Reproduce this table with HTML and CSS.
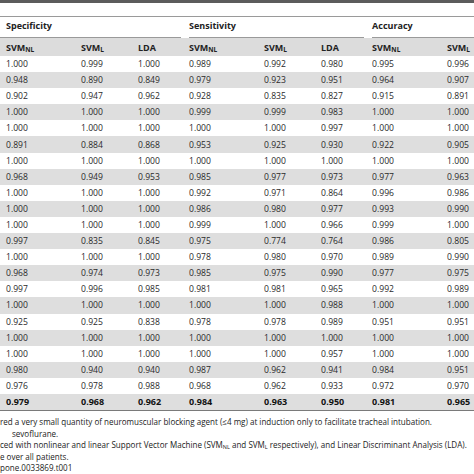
FILE: index.html
```html
<!DOCTYPE html>
<html>
<head>
<meta charset="utf-8">
<link rel="stylesheet" href="styles.css">
</head>
<body>
<div class="page">
  <div class="topbar"></div>
  <table class="data">
    <colgroup>
      <col class="w75"><col class="w57"><col class="w51">
      <col class="w75"><col class="w57"><col class="w51">
      <col class="w75"><col class="wlast">
    </colgroup>
    <thead>
      <tr class="groups">
        <th colspan="3" class="first"><div class="gline">Specificity</div></th>
        <th colspan="3"><div class="gline">Sensitivity</div></th>
        <th colspan="2" class="last"><div class="gline">Accuracy</div></th>
      </tr>
      <tr class="sub">
        <th>SVM<sub>NL</sub></th><th>SVM<sub>L</sub></th><th>LDA</th>
        <th>SVM<sub>NL</sub></th><th>SVM<sub>L</sub></th><th>LDA</th>
        <th>SVM<sub>NL</sub></th><th>SVM<sub>L</sub></th>
      </tr>
    </thead>
    <tbody>
      <tr><td>1.000</td><td>0.999</td><td>1.000</td><td>0.989</td><td>0.992</td><td>0.980</td><td>0.995</td><td>0.996</td></tr>
      <tr><td>0.948</td><td>0.890</td><td>0.849</td><td>0.979</td><td>0.923</td><td>0.951</td><td>0.964</td><td>0.907</td></tr>
      <tr><td>0.902</td><td>0.947</td><td>0.962</td><td>0.928</td><td>0.835</td><td>0.827</td><td>0.915</td><td>0.891</td></tr>
      <tr><td>1.000</td><td>1.000</td><td>1.000</td><td>0.999</td><td>0.999</td><td>0.983</td><td>1.000</td><td>1.000</td></tr>
      <tr><td>1.000</td><td>1.000</td><td>1.000</td><td>1.000</td><td>1.000</td><td>0.997</td><td>1.000</td><td>1.000</td></tr>
      <tr><td>0.891</td><td>0.884</td><td>0.868</td><td>0.953</td><td>0.925</td><td>0.930</td><td>0.922</td><td>0.905</td></tr>
      <tr><td>1.000</td><td>1.000</td><td>1.000</td><td>1.000</td><td>1.000</td><td>1.000</td><td>1.000</td><td>1.000</td></tr>
      <tr><td>0.968</td><td>0.949</td><td>0.953</td><td>0.985</td><td>0.977</td><td>0.973</td><td>0.977</td><td>0.963</td></tr>
      <tr><td>1.000</td><td>1.000</td><td>1.000</td><td>0.992</td><td>0.971</td><td>0.864</td><td>0.996</td><td>0.986</td></tr>
      <tr><td>1.000</td><td>1.000</td><td>1.000</td><td>0.986</td><td>0.980</td><td>0.977</td><td>0.993</td><td>0.990</td></tr>
      <tr><td>1.000</td><td>1.000</td><td>1.000</td><td>0.999</td><td>1.000</td><td>0.966</td><td>0.999</td><td>1.000</td></tr>
      <tr><td>0.997</td><td>0.835</td><td>0.845</td><td>0.975</td><td>0.774</td><td>0.764</td><td>0.986</td><td>0.805</td></tr>
      <tr><td>1.000</td><td>1.000</td><td>1.000</td><td>0.978</td><td>0.980</td><td>0.970</td><td>0.989</td><td>0.990</td></tr>
      <tr><td>0.968</td><td>0.974</td><td>0.973</td><td>0.985</td><td>0.975</td><td>0.990</td><td>0.977</td><td>0.975</td></tr>
      <tr><td>0.997</td><td>0.996</td><td>0.985</td><td>0.981</td><td>0.981</td><td>0.965</td><td>0.992</td><td>0.989</td></tr>
      <tr><td>1.000</td><td>1.000</td><td>1.000</td><td>1.000</td><td>1.000</td><td>0.988</td><td>1.000</td><td>1.000</td></tr>
      <tr><td>0.925</td><td>0.925</td><td>0.838</td><td>0.978</td><td>0.978</td><td>0.989</td><td>0.951</td><td>0.951</td></tr>
      <tr><td>1.000</td><td>1.000</td><td>1.000</td><td>1.000</td><td>1.000</td><td>1.000</td><td>1.000</td><td>1.000</td></tr>
      <tr><td>1.000</td><td>1.000</td><td>1.000</td><td>1.000</td><td>1.000</td><td>0.957</td><td>1.000</td><td>1.000</td></tr>
      <tr><td>0.980</td><td>0.940</td><td>0.940</td><td>0.987</td><td>0.962</td><td>0.941</td><td>0.984</td><td>0.951</td></tr>
      <tr><td>0.976</td><td>0.978</td><td>0.988</td><td>0.968</td><td>0.962</td><td>0.933</td><td>0.972</td><td>0.970</td></tr>
      <tr class="avg"><td>0.979</td><td>0.968</td><td>0.962</td><td>0.984</td><td>0.963</td><td>0.950</td><td>0.981</td><td>0.965</td></tr>
    </tbody>
  </table>
  <div class="notes">
    <p>red a very small quantity of neuromuscular blocking agent (≤4 mg) at induction only to facilitate tracheal intubation.</p>
    <p class="indent">sevoflurane.</p>
    <p>ced with nonlinear and linear Support Vector Machine (SVM<sub>NL</sub> and SVM<sub>L</sub> respectively), and Linear Discriminant Analysis (LDA).</p>
    <p>e over all patients.</p>
    <p>pone.0033869.t001</p>
  </div>
</div>
</body>
</html>
```
FILE: styles.css
```css
html, body {
  margin: 0;
  padding: 0;
  background: #ffffff;
}
body {
  width: 474px;
  height: 474px;
  overflow: hidden;
  font-family: "Open Sans", "DejaVu Sans", sans-serif;
  color: #2a2a2a;
}
.page {
  width: 474px;
}
.topbar {
  height: 3px;
  background: #5c5c5c;
  margin-bottom: 13px;
}
.data {
  border-collapse: collapse;
  table-layout: fixed;
  width: 474px;
  font-size: 8.6px;
  border-top: 1px solid #9a9a9a;
  border-bottom: 1px solid #7a7a7a;
}
.w75 { width: 75px; }
.w57 { width: 57px; }
.w51 { width: 51px; }
.wlast { width: 33px; }
th, td {
  padding: 0 0 0 6px;
  text-align: left;
  white-space: nowrap;
  overflow: visible;
}
.groups th {
  height: 21px;
  padding-top: 0;
  vertical-align: bottom;
  font-weight: 700;
  font-size: 9px;
  color: #222;
}
.gline {
  border-bottom: 1px solid #9a9a9a;
  margin-right: 2px;
  padding-bottom: 5px;
  line-height: 12px;
}
.groups th.first {
  padding-left: 0;
}
.groups th.first .gline {
  padding-left: 6px;
}
.groups th.last .gline {
  margin-right: 0;
}
.sub th {
  background: #dcdcdc;
  height: 18px;
  font-weight: 700;
  font-size: 9px;
  color: #222;
}
sub {
  font-size: 6.5px;
  vertical-align: -1px;
  line-height: 0;
}
tbody td {
  height: 16.1px;
  line-height: 12px;
}
tbody tr:nth-child(even) td {
  background: #dedede;
}
tr.avg td {
  font-weight: 700;
  color: #111;
  font-size: 9px;
}
.notes {
  padding-top: 5px;
  font-size: 8.05px;
  line-height: 11.6px;
  color: #222;
  white-space: nowrap;
}
.notes p {
  margin: 0;
}
.notes .indent {
  padding-left: 12px;
}
.notes sub {
  font-size: 5.5px;
}
```
